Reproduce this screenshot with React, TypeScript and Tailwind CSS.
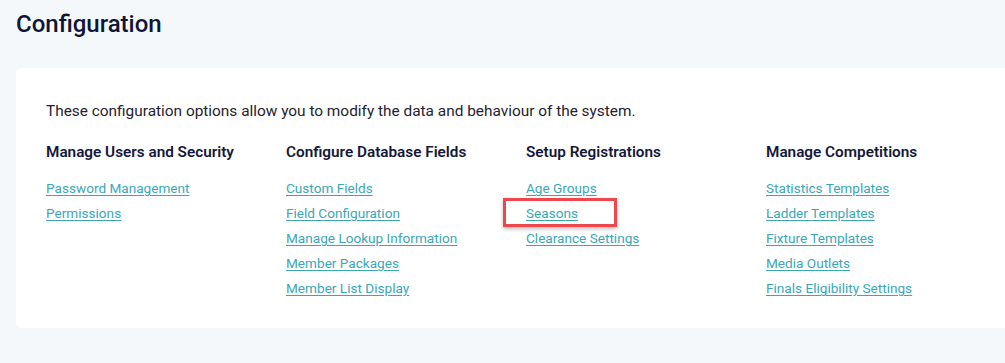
const sections = [
  {
    title: "Manage Users and Security",
    links: ["Password Management", "Permissions"],
  },
  {
    title: "Configure Database Fields",
    links: [
      "Custom Fields",
      "Field Configuration",
      "Manage Lookup Information",
      "Member Packages",
      "Member List Display",
    ],
  },
  {
    title: "Setup Registrations",
    links: ["Age Groups", "Seasons", "Clearance Settings"],
  },
  {
    title: "Manage Competitions",
    links: [
      "Statistics Templates",
      "Ladder Templates",
      "Fixture Templates",
      "Media Outlets",
      "Finals Eligibility Settings",
    ],
  },
];

export default function App() {
  return (
    <div className="h-[363px] w-[1005px] overflow-hidden bg-[#f5f8fb] font-['Roboto',sans-serif]">
      <h1 className="pl-4 pt-[9px] text-[24px] font-medium leading-[30px] text-[#0f1535]">
        Configuration
      </h1>
      <div className="ml-4 mt-[29px] h-[260px] w-[1000px] rounded-md bg-white pl-[30px] pt-[33px]">
        <p className="text-[15.4px] leading-5 text-[#1f2230]">
          These configuration options allow you to modify the data and behaviour of the system.
        </p>
        <div className="mt-[21px] flex">
          {sections.map((s) => (
            <div key={s.title} className="w-[240px]">
              <h2 className="text-[15.3px] font-semibold leading-5 text-[#14183a]">
                {s.title}
              </h2>
              <ul className="mt-[15px] flex flex-col">
                {s.links.map((l) => (
                  <li key={l} className="h-[25px] leading-[22px]">
                    {l === "Seasons" ? (
                      <span className="relative inline-block">
                        <a href="#" className="text-[13.6px] text-[#3aa7b6] underline underline-offset-2">
                          {l}
                        </a>
                        <span className="absolute -left-[23px] -top-[4px] h-[29px] w-[114px] border-[3px] border-[#f0474d] shadow-[0_2px_4px_rgba(0,0,0,0.25)]" />
                      </span>
                    ) : (
                      <a href="#" className="text-[13.6px] text-[#3aa7b6] underline underline-offset-2">
                        {l}
                      </a>
                    )}
                  </li>
                ))}
              </ul>
            </div>
          ))}
        </div>
      </div>
    </div>
  );
}
